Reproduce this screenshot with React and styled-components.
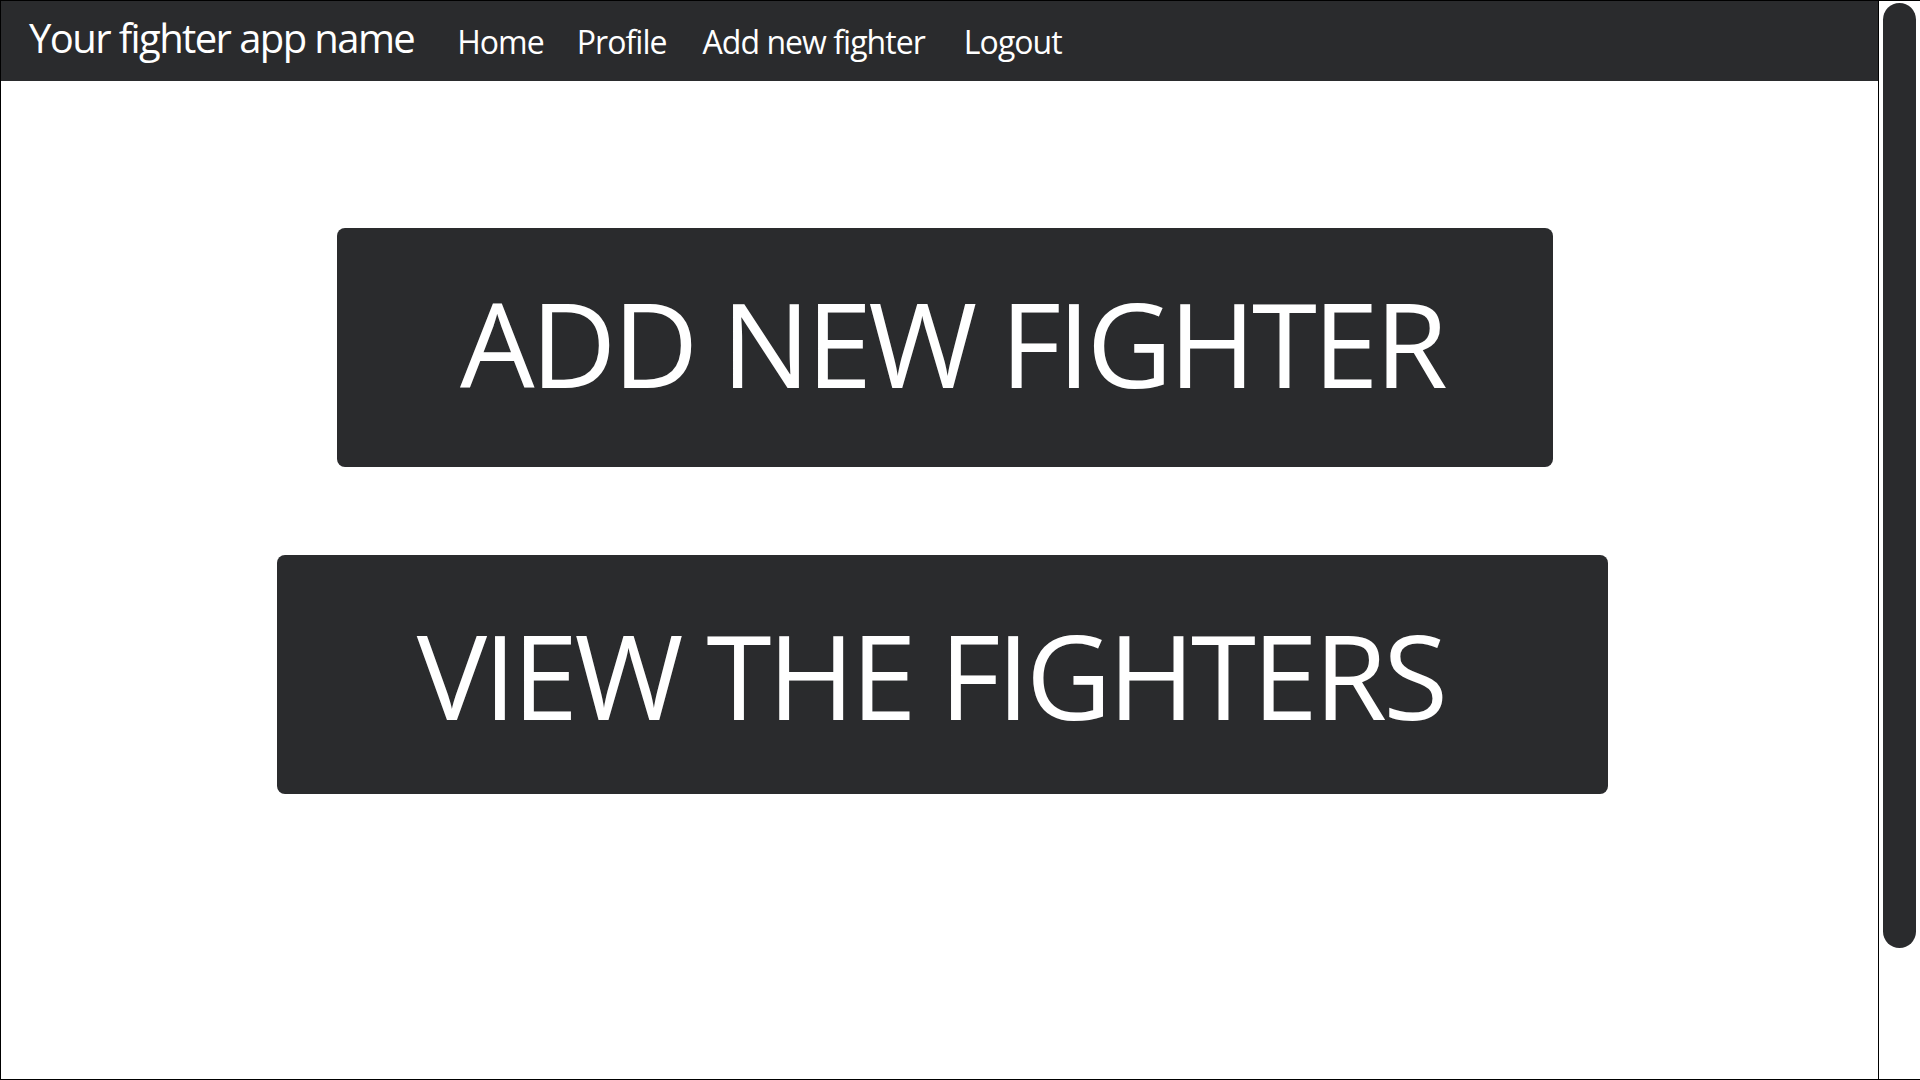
import React from "react";
import styled, { createGlobalStyle } from "styled-components";

const Global = createGlobalStyle`
  html, body { margin: 0; padding: 0; background: #ffffff; }
  body { font-family: "Open Sans", "Noto Sans", sans-serif; overflow: hidden; }
  * { box-sizing: border-box; }
`;

const Frame = styled.div`
  width: 1920px;
  height: 1080px;
  display: flex;
  border-top: 1px solid #000;
  border-left: 1px solid #000;
  border-bottom: 1px solid #000;
  background: #fff;
`;

const Page = styled.div`
  width: 1878px;
  flex: none;
  display: flex;
  flex-direction: column;
  border-right: 1px solid #000;
`;

const Track = styled.div`
  flex: 1;
  display: flex;
  justify-content: center;
  padding: 2px 3px 0 2px;
`;

const Thumb = styled.div`
  width: 33px;
  height: 945px;
  background: #2a2b2d;
  border-radius: 17px;
`;

const NavBar = styled.nav`
  height: 80px;
  flex: none;
  background: #2a2b2d;
  display: flex;
  align-items: center;
  padding-left: 28px;
  color: #fff;
`;

const Brand = styled.a`
  font-size: 40px;
  letter-spacing: -0.04em;
  line-height: 1;
  color: #fff;
  text-decoration: none;
  margin-right: 43px;
  margin-top: -6px;
`;

const NavLinks = styled.div`
  display: flex;
  align-items: center;
  gap: 33px;
  margin-top: 2px;
`;

const NavLink = styled.a`
  font-size: 32px;
  letter-spacing: -0.03em;
  line-height: 1;
  color: #fff;
  text-decoration: none;
  margin-left: ${(p) => p.$ml || 0}px;
`;

const Main = styled.main`
  flex: 1;
  display: flex;
  flex-direction: column;
  align-items: center;
  padding-top: 147px;
  padding-left: 5px;
  gap: 88px;
`;

const BigButton = styled.button`
  width: ${(p) => p.$w}px;
  height: 239px;
  flex: none;
  margin-left: ${(p) => p.$ml || 0}px;
  border: none;
  border-radius: 8px;
  background: #2a2b2d;
  color: #fff;
  font-family: "Open Sans", "Noto Sans", sans-serif;
  font-size: 118px;
  letter-spacing: -0.032em;
  line-height: 1;
  display: flex;
  align-items: center;
  justify-content: center;
  padding: ${(p) => p.$pt || 0}px ${(p) => p.$pr || 0}px ${(p) => p.$pb || 0}px ${(p) => p.$pl || 0}px;
  cursor: pointer;
`;

export default function App() {
  return (
    <>
      <Global />
      <Frame>
        <Page>
          <NavBar>
            <Brand href="#">Your fighter app name</Brand>
            <NavLinks>
              <NavLink href="#">Home</NavLink>
              <NavLink href="#">Profile</NavLink>
              <NavLink href="#" $ml={3}>Add new fighter</NavLink>
              <NavLink href="#" $ml={6}>Logout</NavLink>
            </NavLinks>
          </NavBar>
          <Main>
            <BigButton $w={1216} $ml={6} $pl={14} $pb={10}>ADD NEW FIGHTER</BigButton>
            <BigButton $w={1331} $pr={23}>VIEW THE FIGHTERS</BigButton>
          </Main>
        </Page>
        <Track>
          <Thumb />
        </Track>
      </Frame>
    </>
  );
}
